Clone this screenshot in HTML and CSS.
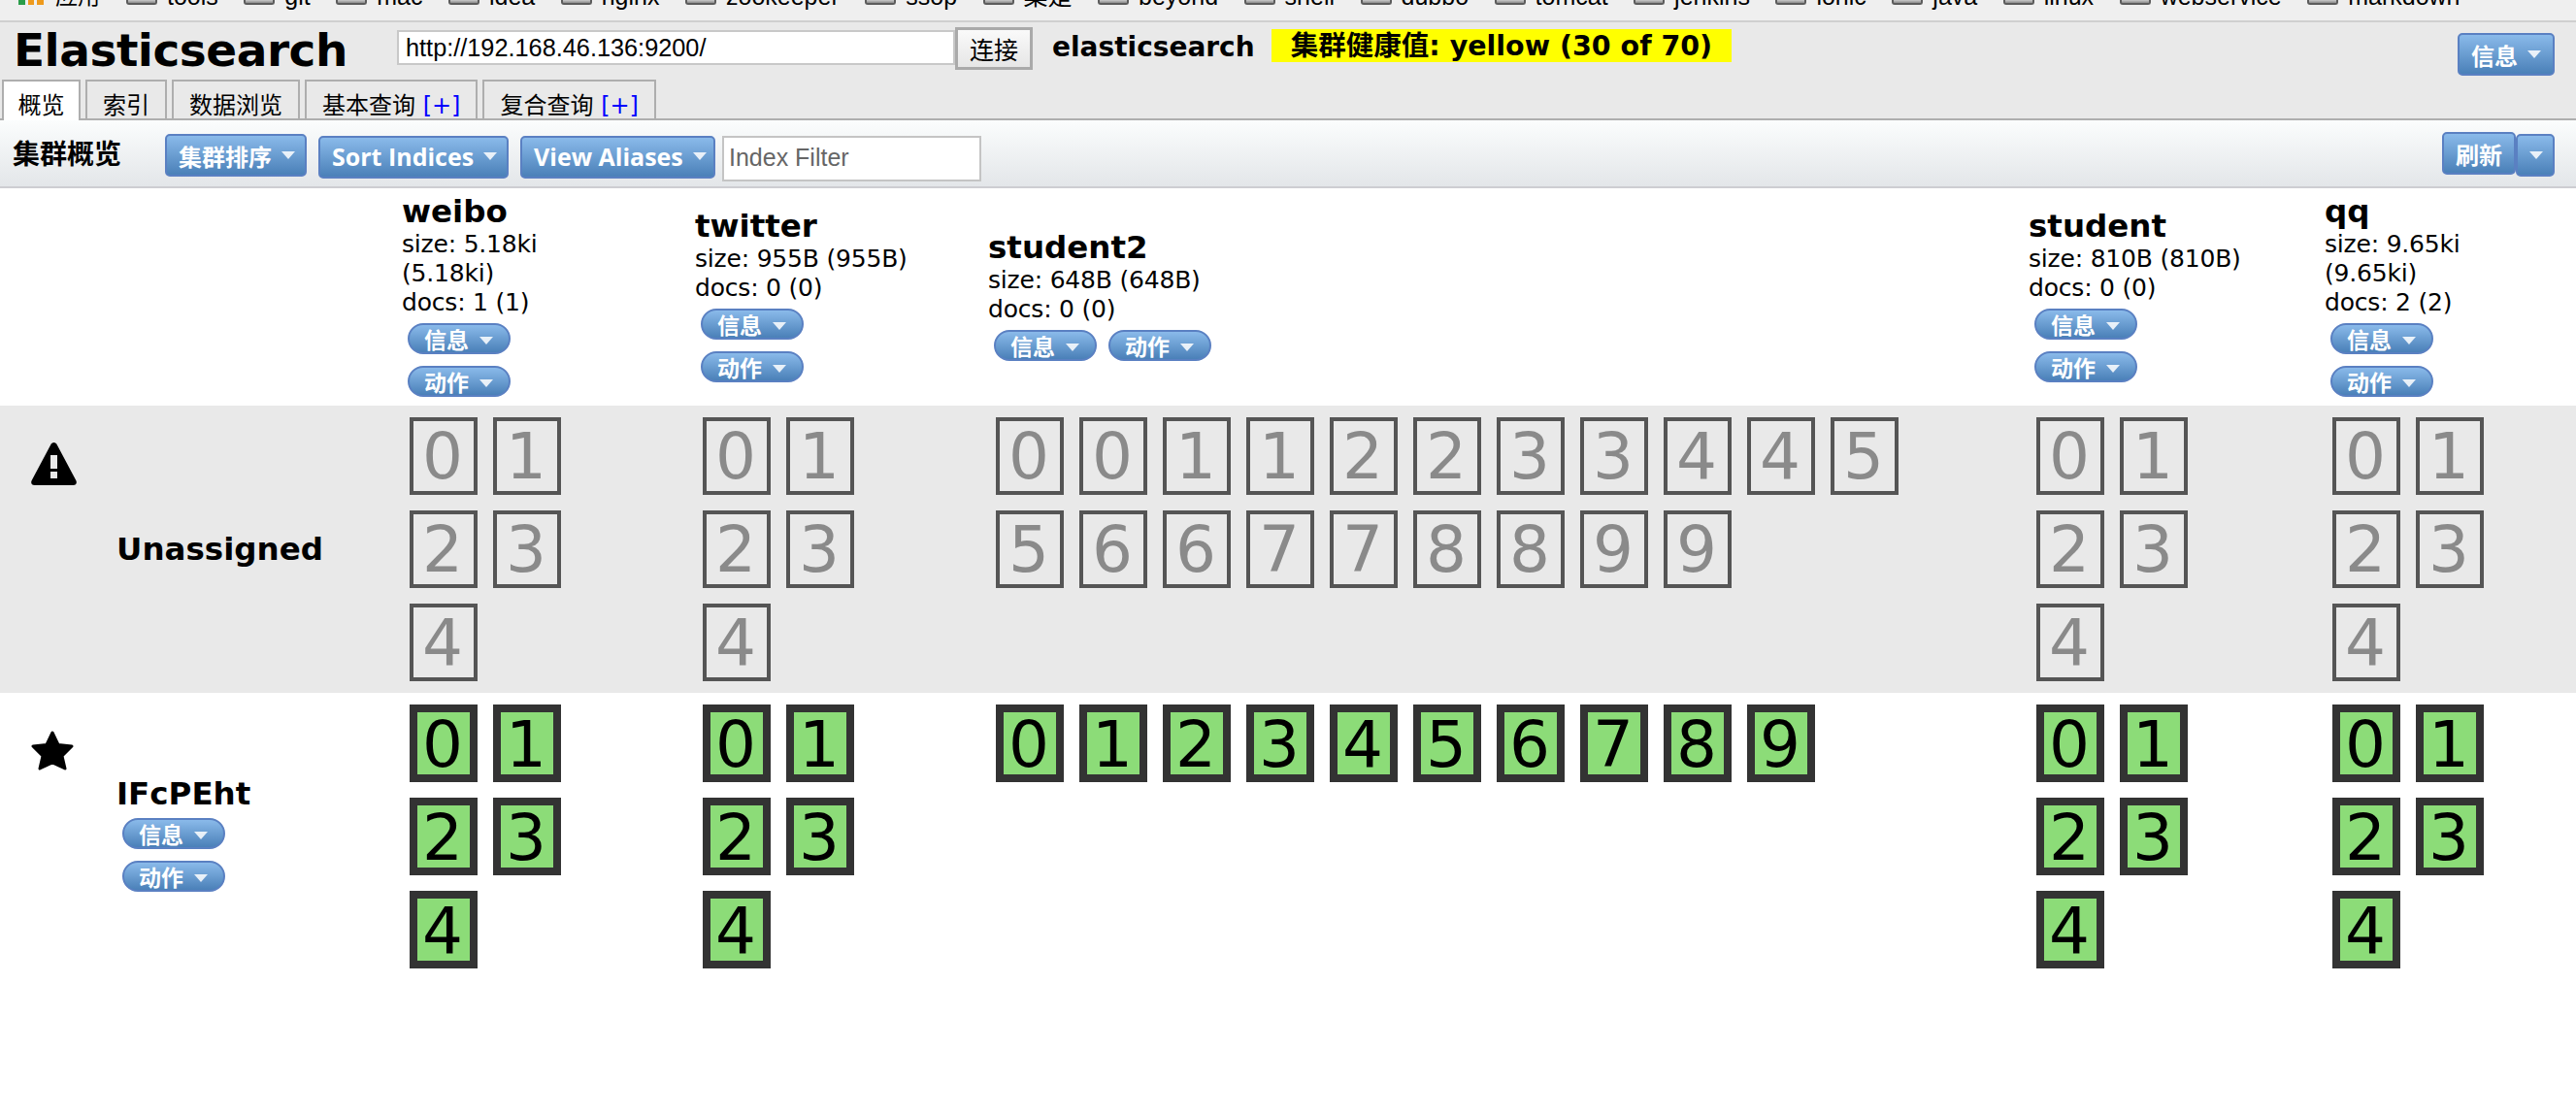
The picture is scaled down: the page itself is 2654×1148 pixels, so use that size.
FILE: index.html
```html
<!DOCTYPE html>
<html>
<head>
<meta http-equiv="Content-Type" content="text/html; charset=utf-8"/>
<title>Elasticsearch</title>
<link rel="stylesheet" href="styles.css">
</head>
<body>

<div class="bookmarks">
  <div class="bm-list">
    <span class="apps"><i class="g"></i><i class="o"></i><i class="o"></i></span><span class="bm-text apps-text">应用</span>
    <span class="bm"><i class="folder"></i>tools</span>
    <span class="bm"><i class="folder"></i>git</span>
    <span class="bm"><i class="folder"></i>mac</span>
    <span class="bm"><i class="folder"></i>idea</span>
    <span class="bm"><i class="folder"></i>nginx</span>
    <span class="bm"><i class="folder"></i>zookeeper</span>
    <span class="bm"><i class="folder"></i>ssop</span>
    <span class="bm"><i class="folder"></i>集是</span>
    <span class="bm"><i class="folder"></i>beyond</span>
    <span class="bm"><i class="folder"></i>shell</span>
    <span class="bm"><i class="folder"></i>dubbo</span>
    <span class="bm"><i class="folder"></i>tomcat</span>
    <span class="bm"><i class="folder"></i>jenkins</span>
    <span class="bm"><i class="folder"></i>ionic</span>
    <span class="bm"><i class="folder"></i>java</span>
    <span class="bm"><i class="folder"></i>linux</span>
    <span class="bm"><i class="folder"></i>webservice</span>
    <span class="bm"><i class="folder"></i>markdown</span>
  </div>
</div>

<div class="head">
  <div class="head-top">
    <h1 class="title">Elasticsearch</h1>
    <input class="url" type="text" value="http://192.168.46.136:9200/">
    <button class="connect">连接</button>
    <span class="cluster-name">elasticsearch</span>
    <span class="health">集群健康值: yellow (30 of 70)</span>
    <span class="btn head-info">信息<i class="caret"></i></span>
  </div>
  <div class="tabs">
    <span class="tab active">概览</span>
    <span class="tab">索引</span>
    <span class="tab">数据浏览</span>
    <span class="tab">基本查询 <b class="plus">[+]</b></span>
    <span class="tab">复合查询 <b class="plus">[+]</b></span>
  </div>
</div>

<div class="toolbar">
  <span class="bar-title">集群概览</span>
  <span class="btn sort-cn">集群排序<i class="caret"></i></span>
  <span class="btn sort-en">Sort Indices<i class="caret"></i></span>
  <span class="btn alias">View Aliases<i class="caret"></i></span>
  <input class="filter" type="text" placeholder="Index Filter">
  <span class="refresh">
    <span class="btn refresh-main">刷新</span>
    <span class="btn refresh-more"><i class="caret"></i></span>
  </span>
</div>

<div class="overview">
  <!-- header row -->
  <div class="cell"></div>
  <div class="cell idx">
    <h2>weibo</h2>
    <p>size: 5.18ki (5.18ki)<br>docs: 1 (1)</p>
    <span class="pill">信息<i class="caret"></i></span><span class="pill">动作<i class="caret"></i></span>
  </div>
  <div class="cell idx">
    <h2>twitter</h2>
    <p>size: 955B (955B)<br>docs: 0 (0)</p>
    <span class="pill">信息<i class="caret"></i></span><span class="pill">动作<i class="caret"></i></span>
  </div>
  <div class="cell idx wide">
    <h2>student2</h2>
    <p>size: 648B (648B)<br>docs: 0 (0)</p>
    <span class="pill">信息<i class="caret"></i></span><span class="pill">动作<i class="caret"></i></span>
  </div>
  <div class="cell idx">
    <h2>student</h2>
    <p>size: 810B (810B)<br>docs: 0 (0)</p>
    <span class="pill">信息<i class="caret"></i></span><span class="pill">动作<i class="caret"></i></span>
  </div>
  <div class="cell idx last">
    <h2>qq</h2>
    <p>size: 9.65ki (9.65ki)<br>docs: 2 (2)</p>
    <span class="pill">信息<i class="caret"></i></span><span class="pill">动作<i class="caret"></i></span>
  </div>

  <!-- unassigned row -->
  <div class="cell row-head grey">
    <svg class="icon warn" viewBox="0 0 47 44"><path fill-rule="evenodd" d="M23.5 0c1.5 0 2.6 1 3.2 2.2l19.7 37c1.2 2.4-.2 4.8-2.9 4.8H3.5C.8 44-.6 41.600.6 39.200l19.700-37C20.900 1 22 0 23.500 0zM20 13v14h7V13zM20 30v7h7v-7z"/></svg>
    <strong class="node-name">Unassigned</strong>
  </div>
  <div class="cell shards grey">
    <span class="shard">0</span><span class="shard">1</span><span class="shard">2</span><span class="shard">3</span><span class="shard">4</span>
  </div>
  <div class="cell shards grey">
    <span class="shard">0</span><span class="shard">1</span><span class="shard">2</span><span class="shard">3</span><span class="shard">4</span>
  </div>
  <div class="cell shards grey wide">
    <span class="shard">0</span><span class="shard">0</span><span class="shard">1</span><span class="shard">1</span><span class="shard">2</span><span class="shard">2</span><span class="shard">3</span><span class="shard">3</span><span class="shard">4</span><span class="shard">4</span><span class="shard">5</span><span class="shard">5</span><span class="shard">6</span><span class="shard">6</span><span class="shard">7</span><span class="shard">7</span><span class="shard">8</span><span class="shard">8</span><span class="shard">9</span><span class="shard">9</span>
  </div>
  <div class="cell shards grey">
    <span class="shard">0</span><span class="shard">1</span><span class="shard">2</span><span class="shard">3</span><span class="shard">4</span>
  </div>
  <div class="cell shards grey">
    <span class="shard">0</span><span class="shard">1</span><span class="shard">2</span><span class="shard">3</span><span class="shard">4</span>
  </div>

  <!-- node row -->
  <div class="cell row-head">
    <svg class="icon star" viewBox="0 0 44 41"><path stroke="#000" stroke-width="3" stroke-linejoin="round" d="M22 2l6 12.500 14 1.500-10 10 3 13-13-6-13 6 3-13L2 16l14-1.500z"/></svg>
    <div>
      <strong class="node-name">IFcPEht</strong>
      <div class="node-pills"><span class="pill">信息<i class="caret"></i></span><span class="pill">动作<i class="caret"></i></span></div>
    </div>
  </div>
  <div class="cell shards">
    <span class="shard on">0</span><span class="shard on">1</span><span class="shard on">2</span><span class="shard on">3</span><span class="shard on">4</span>
  </div>
  <div class="cell shards">
    <span class="shard on">0</span><span class="shard on">1</span><span class="shard on">2</span><span class="shard on">3</span><span class="shard on">4</span>
  </div>
  <div class="cell shards wide">
    <span class="shard on">0</span><span class="shard on">1</span><span class="shard on">2</span><span class="shard on">3</span><span class="shard on">4</span><span class="shard on">5</span><span class="shard on">6</span><span class="shard on">7</span><span class="shard on">8</span><span class="shard on">9</span>
  </div>
  <div class="cell shards">
    <span class="shard on">0</span><span class="shard on">1</span><span class="shard on">2</span><span class="shard on">3</span><span class="shard on">4</span>
  </div>
  <div class="cell shards">
    <span class="shard on">0</span><span class="shard on">1</span><span class="shard on">2</span><span class="shard on">3</span><span class="shard on">4</span>
  </div>
</div>

</body>
</html>
```

FILE: styles.css
```css
body {
  margin: 0;
  background: white;
  color: black;
  font-family: "DejaVu Sans", "Noto Sans CJK SC", sans-serif;
  font-size: 25px;
  overflow: hidden;
}

/* browser bookmarks, only the bottom edge is visible */
.bookmarks {
  height: 21px;
  background: #efefef;
  border-bottom: 2px solid #cfcfcf;
  overflow: hidden;
}
.bm-list {
  display: flex;
  align-items: flex-start;
  margin-top: -19px;
  padding-left: 19px;
  height: 30px;
  font-family: "Liberation Sans", "Noto Sans CJK SC", sans-serif;
  font-size: 25px;
  line-height: 30px;
  white-space: nowrap;
}
.apps {
  display: flex;
  gap: 3px;
  width: 26px;
  height: 24px;
  align-items: flex-end;
}
.apps i {
  width: 7px;
  height: 5px;
}
.apps .g { background: #2a9d4a; }
.apps .o { background: #ee9a1c; }
.apps-text {
  margin-left: 12px;
  margin-right: 27px;
  font-size: 23px;
}
.bm {
  display: flex;
  margin-right: 26.500px;
}
.folder {
  display: block;
  width: 32px;
  height: 24px;
  margin-right: 10px;
  box-sizing: border-box;
  border: 2px solid #5c5c5c;
  border-top: none;
  border-radius: 0 0 3px 3px;
  background: linear-gradient(#ddd 0, #ddd 18px, #8d8d8d 22px);
}

/* head */
.head {
  height: 99px;
  background: #e9e9e9;
  border-bottom: 2px solid #aeaeae;
}
.head-top {
  display: flex;
  align-items: flex-start;
  height: 59px;
}
.title {
  width: 409px;
  margin: 0;
  padding-left: 14px;
  box-sizing: border-box;
  font-size: 47px;
  line-height: 58px;
  font-weight: bold;
  letter-spacing: -0.5px;
}
.url {
  width: 575px;
  height: 36px;
  margin: 8px 0 0;
  padding: 0 7px;
  box-sizing: border-box;
  border: 2px solid #c8c8c8;
  background: white;
  font-family: "Liberation Sans", sans-serif;
  font-size: 25.300px;
  outline: none;
}
.connect {
  width: 80px;
  height: 44px;
  margin: 5px 0 0;
  padding: 0;
  border: 3px solid #aaa;
  background: linear-gradient(#fafafa, #e6e6e6);
  font-family: "Noto Sans CJK SC", sans-serif;
  font-size: 25px;
  line-height: 36px;
  color: black;
}
.cluster-name {
  margin: 7px 0 0 20px;
  width: 206px;
  font-size: 28px;
  font-weight: bold;
  line-height: 38px;
  white-space: nowrap;
}
.health {
  width: 474px;
  height: 34px;
  margin: 7px 0 0 20px;
  background: #ffff00;
  text-align: center;
  font-size: 28.500px;
  font-weight: bold;
  line-height: 36px;
  white-space: nowrap;
}
.head-info {
  margin: 11px 22px 0 auto;
}

.tabs {
  display: flex;
  gap: 5px;
  height: 40px;
  padding-left: 2px;
  font-size: 24px;
}
.tab {
  height: 40px;
  padding: 0 16px;
  box-sizing: border-box;
  border: 2px solid #aeaeae;
  border-bottom: none;
  line-height: 50px;
  white-space: nowrap;
  overflow: hidden;
}
.tab.active {
  height: 42px;
  padding: 0 14.500px;
  background: white;
}
.plus {
  font-weight: normal;
  color: #0000ff;
}

/* buttons */
.btn {
  display: inline-flex;
  align-items: center;
  box-sizing: border-box;
  height: 44px;
  padding: 0 12px;
  border: 2px solid #5a80c2;
  border-radius: 5px;
  background: linear-gradient(#8abaea, #4a80b8);
  color: white;
  font-size: 24px;
  font-weight: bold;
  white-space: nowrap;
}
.caret {
  display: inline-block;
  width: 0;
  height: 0;
  margin-left: 10px;
  border-left: 7px solid transparent;
  border-right: 7px solid transparent;
  border-top: 8px solid rgba(255, 255, 255, 0.85);
}

/* toolbar */
.toolbar {
  display: flex;
  align-items: flex-start;
  height: 68px;
  background: linear-gradient(#fbfdfd, #e3e6e9);
  border-bottom: 2px solid #cdcdd2;
}
.bar-title {
  width: 170px;
  padding-left: 13px;
  box-sizing: border-box;
  margin-top: 14px;
  font-size: 28px;
  font-weight: bold;
  line-height: 44px;
}
.sort-cn {
  width: 146px;
  margin-top: 14px;
}
.sort-en {
  width: 196px;
  margin: 16px 0 0 12px;
  padding-bottom: 2px;
  font-family: "Open Sans", sans-serif;
  font-size: 25px;
  justify-content: space-between;
}
.alias {
  width: 201px;
  margin: 16px 0 0 12px;
  padding-bottom: 2px;
  font-family: "Open Sans", sans-serif;
  font-size: 25px;
  justify-content: space-between;
}
.filter {
  width: 267px;
  height: 47px;
  margin: 16px 0 0 7px;
  padding: 0 5px 2px;
  box-sizing: border-box;
  border: 2px solid #c4c4c4;
  background: white;
  font-family: "Liberation Sans", sans-serif;
  font-size: 25px;
  outline: none;
}
.filter::placeholder {
  color: #666;
  opacity: 1;
}
.refresh {
  display: flex;
  align-items: flex-start;
  margin: 12px 22px 0 auto;
}
.refresh-main {
  width: 76px;
}
.refresh-more {
  width: 40px;
  margin-top: 2px;
  padding: 0 0 0 2px;
}
.refresh-more .caret {
  margin-left: 10px;
}

/* overview grid */
.overview {
  display: grid;
  grid-template-columns: 414px 302px 302px 1072px 305px 259px;
  grid-template-rows: 224px auto auto;
}
.cell {
  min-width: 0;
}
.grey {
  background: #e9e9e9;
}
.idx {
  align-self: center;
  padding-top: 2px;
  padding-right: 78px;
  letter-spacing: -0.2px;
}
.idx.wide {
  padding-right: 50px;
}
.idx.last {
  padding-right: 34px;
}
.idx h2 {
  margin: 0;
  font-size: 32.500px;
  font-weight: bold;
  line-height: 38px;
  letter-spacing: 0;
}
.idx p {
  margin: 0;
  line-height: 30px;
}
.pill {
  display: inline-flex;
  align-items: flex-start;
  box-sizing: border-box;
  width: 106px;
  height: 32px;
  margin: 6px;
  padding-left: 15px;
  border: 2px solid #5a80c2;
  border-radius: 16px;
  overflow: hidden;
  background: linear-gradient(#8abaea, #4a80b8);
  color: white;
  font-size: 23px;
  font-weight: bold;
  line-height: 32px;
  vertical-align: top;
  letter-spacing: 0;
}
.pill .caret {
  margin-top: 12px;
  margin-left: 11px;
}

.row-head {
  position: relative;
  display: flex;
  align-items: center;
  padding-left: 120px;
  min-height: 292px;
}
.node-name {
  display: block;
  font-size: 32.500px;
  line-height: 38px;
  white-space: nowrap;
}
.node-pills {
  width: 118px;
}
.icon {
  position: absolute;
  left: 32px;
}
.warn {
  top: 38px;
  width: 47px;
  height: 44px;
}
.star {
  top: 39px;
  width: 44px;
  height: 41px;
}

.shards {
  display: flex;
  flex-wrap: wrap;
  align-content: flex-start;
  padding: 4px 60px 4px 0;
}
.shards.wide {
  padding-right: 50px;
}
.shard {
  width: 70px;
  height: 80px;
  margin: 8px;
  padding-right: 2px;
  box-sizing: border-box;
  border: 4px solid #555;
  color: #8a8a8a;
  text-align: center;
  font-size: 66px;
  line-height: 74px;
}
.shard.on {
  border: 8px solid #333;
  background: #8cdc78;
  color: black;
  line-height: 68px;
}
```
